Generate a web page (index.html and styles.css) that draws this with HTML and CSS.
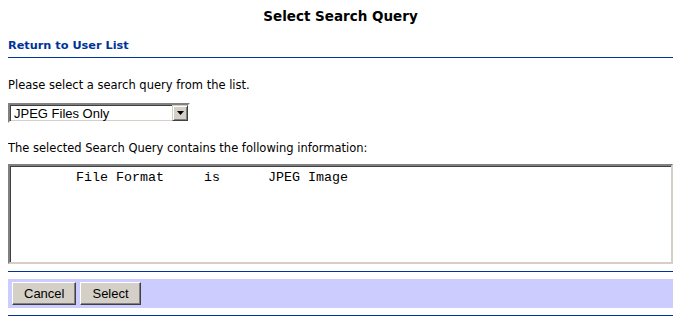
FILE: index.html
```html
<!DOCTYPE html>
<html>
<head>
<meta charset="utf-8">
<title>Select Search Query</title>
<link rel="stylesheet" href="styles.css">
</head>
<body>
<h1 class="title">Select Search Query</h1>
<div class="nav"><a class="back" href="#">Return to User List</a></div>
<div class="rule"></div>
<p class="text first">Please select a search query from the list.</p>
<div class="select">
  <span class="select-value">JPEG Files Only</span>
  <span class="select-btn"><svg width="7" height="4" viewBox="0 0 7 4"><path d="M0 0h7L3.5 4z" fill="#000"/></svg></span>
</div>
<p class="text second">The selected Search Query contains the following information:</p>
<textarea class="info" readonly>	File Format	is	JPEG Image</textarea>
<div class="rule rule-a"></div>
<div class="actions">
  <button class="btn" type="button">Cancel</button>
  <button class="btn" type="button">Select</button>
</div>
<div class="rule rule-b"></div>
</body>
</html>
```
FILE: styles.css
```css
html, body {
  background: #fff;
}
body {
  margin: 8px;
  font-family: "DejaVu Sans", Verdana, sans-serif;
  color: #000;
}
.title {
  margin: 0;
  font-size: 13.5px;
  font-weight: bold;
  line-height: 16px;
  text-align: center;
}
.nav {
  margin-top: 13px;
  line-height: 14px;
}
.back {
  font-size: 11.3px;
  font-weight: bold;
  color: #003399;
  text-decoration: none;
}
.rule {
  height: 1px;
  background: #003399;
  margin-top: 4px;
}
.text {
  margin: 0;
  font-size: 11.5px;
  line-height: 14px;
}
.first {
  margin-top: 20px;
}
.select {
  margin-top: 11px;
  width: 182px;
  height: 20px;
  box-sizing: border-box;
  display: flex;
  align-items: center;
  border: 2px solid;
  border-color: #808080 #fff #fff #808080;
  box-shadow: inset 1px 1px 0 #404040, inset -1px -1px 0 #d4d0c8;
  background: #fff;
}
.select-value {
  flex: 1;
  font-family: "Liberation Sans", Arial, sans-serif;
  font-size: 13px;
  padding-left: 4px;
  line-height: 15px;
}
.select-btn {
  width: 16px;
  height: 16px;
  box-sizing: border-box;
  background: #d4d0c8;
  border: 1px solid;
  border-color: #d4d0c8 #404040 #404040 #d4d0c8;
  box-shadow: inset 1px 1px 0 #fff, inset -1px -1px 0 #808080;
  display: flex;
  align-items: center;
  justify-content: center;
}
.second {
  margin-top: 18px;
}
.info {
  display: block;
  margin-top: 9px;
  width: 100%;
  height: 100px;
  box-sizing: border-box;
  resize: none;
  padding: 4px 2px 2px;
  font-family: "Liberation Mono", "Courier New", monospace;
  font-size: 13.333px;
  line-height: 16px;
  tab-size: 8;
  color: #000;
  border: 2px solid;
  border-color: #808080 #d4d0c8 #d4d0c8 #808080;
  box-shadow: inset 1px 1px 0 #404040;
  outline: none;
}
.rule-a {
  margin-top: 7px;
}
.actions {
  margin-top: 7px;
  background: #ccccff;
  height: 29px;
  display: flex;
  align-items: center;
  gap: 4px;
  padding-left: 4px;
}
.btn {
  font-family: "Liberation Sans", Arial, sans-serif;
  font-size: 13px;
  color: #000;
  background: #d4d0c8;
  height: 23px;
  padding: 0 11px;
  margin: 0;
  border: 1px solid;
  border-color: #fff #404040 #404040 #fff;
  box-shadow: inset -1px -1px 0 #808080, inset 1px 1px 0 #d4d0c8;
}
.rule-b {
  margin-top: 7px;
}
```
